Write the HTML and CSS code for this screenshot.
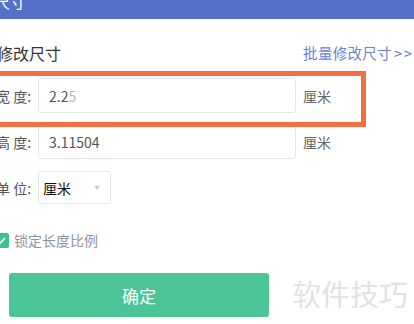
FILE: index.html
```html
<!DOCTYPE html>
<html lang="zh">
<head>
<meta charset="utf-8">
<link rel="stylesheet" href="styles.css">
</head>
<body>
<div class="page">
  <div class="header"><span class="header-title">尺寸</span></div>
  <div class="content">
    <div class="title-row">
      <span class="title">修改尺寸</span>
      <span class="batch">批量修改尺寸<span class="arrows">&gt;&gt;</span></span>
    </div>
    <div class="row">
      <span class="label">宽 度:</span>
      <div class="input"><span class="val">2.2</span><span class="val-light">5</span></div>
      <span class="unit">厘米</span>
    </div>
    <div class="row">
      <span class="label">高 度:</span>
      <div class="input"><span class="val">3.11504</span></div>
      <span class="unit">厘米</span>
    </div>
    <div class="row">
      <span class="label">单 位:</span>
      <div class="select"><span class="sel-text">厘米</span><span class="caret"></span></div>
    </div>
    <div class="check-row">
      <span class="checkbox"><svg width="11" height="11" viewBox="0 0 11 11"><path d="M2 5.8 L4.5 8 L9 3" fill="none" stroke="#fff" stroke-width="1.8"/></svg></span>
      <span class="check-text">锁定长度比例</span>
    </div>
    <div class="btn-row">
      <button class="btn">确定</button>
    </div>
  </div>
  <div class="highlight"></div>
  <div class="watermark">软件技巧</div>
</div>
</body>
</html>
```
FILE: styles.css
```css
* { box-sizing: border-box; }
html, body { margin: 0; padding: 0; }
body {
  width: 414px;
  height: 324px;
  overflow: hidden;
  background: #fff;
  font-family: "Noto Sans CJK SC", "Noto Sans", sans-serif;
}
.page { position: relative; width: 414px; height: 324px; overflow: hidden; }
.header {
  height: 19px;
  background: #5470c9;
  overflow: hidden;
}
.header-title {
  display: block;
  color: #fff;
  font-size: 16px;
  line-height: 16px;
  margin-top: -7px;
  margin-left: -6px;
}
.title-row {
  display: flex;
  justify-content: space-between;
  align-items: center;
  height: 20px;
  margin-top: 24px;
  margin-bottom: 15px;
}
.title {
  font-size: 16px;
  line-height: 20px;
  color: #333;
  margin-left: -3px;
}
.batch {
  font-size: 14.5px;
  line-height: 20px;
  color: #6b82d3;
  letter-spacing: 0.3px;
  margin-right: 0;
}
.arrows {
  margin-left: 2px;
  letter-spacing: 2px;
}
.row {
  display: flex;
  align-items: center;
  height: 35px;
  margin-bottom: 11px;
}
.label {
  width: 42px;
  margin-left: -4px;
  font-size: 14px;
  line-height: 20px;
  color: #555;
  white-space: pre;
}
.input {
  width: 258px;
  height: 35px;
  border: 1px solid #e6e6e6;
  border-radius: 3px;
  padding-left: 10px;
  display: flex;
  align-items: center;
  font-size: 14px;
  color: #555;
}
.val-light { color: #b5b5b5; }
.unit {
  margin-left: 7px;
  font-size: 14px;
  line-height: 20px;
  color: #666;
}
.select {
  width: 73px;
  height: 33px;
  border: 1px solid #e6e6e6;
  border-radius: 3px;
  display: flex;
  align-items: center;
  justify-content: space-between;
  padding: 0 10px 0 4px;
  font-size: 14px;
  color: #111;
}
.caret {
  width: 0;
  height: 0;
  border-left: 3px solid transparent;
  border-right: 3px solid transparent;
  border-top: 4px solid #ccc;
}
.check-row {
  display: flex;
  align-items: center;
  margin-top: 27px;
  height: 16px;
}
.checkbox {
  width: 15px;
  height: 15px;
  margin-left: -6px;
  background: #3fbf8f;
  border-radius: 2px;
  display: flex;
  align-items: center;
  justify-content: center;
}
.check-text {
  margin-left: 5px;
  font-size: 14px;
  line-height: 16px;
  color: #8e939c;
}
.btn-row { margin-top: 25px; padding-left: 9px; }
.btn {
  display: block;
  width: 260px;
  height: 44px;
  border: none;
  border-radius: 3px;
  background: #4bc597;
  color: #fff;
  font-family: "Noto Sans CJK SC", sans-serif;
  font-size: 17px;
  padding: 0;
}
.highlight {
  position: absolute;
  left: -10px;
  top: 71px;
  width: 376px;
  height: 56px;
  border: 5px solid #f0703f;
}
.watermark {
  position: absolute;
  left: 292px;
  top: 274px;
  font-size: 29px;
  color: #e2e2e2;
  line-height: 38px;
}
```
